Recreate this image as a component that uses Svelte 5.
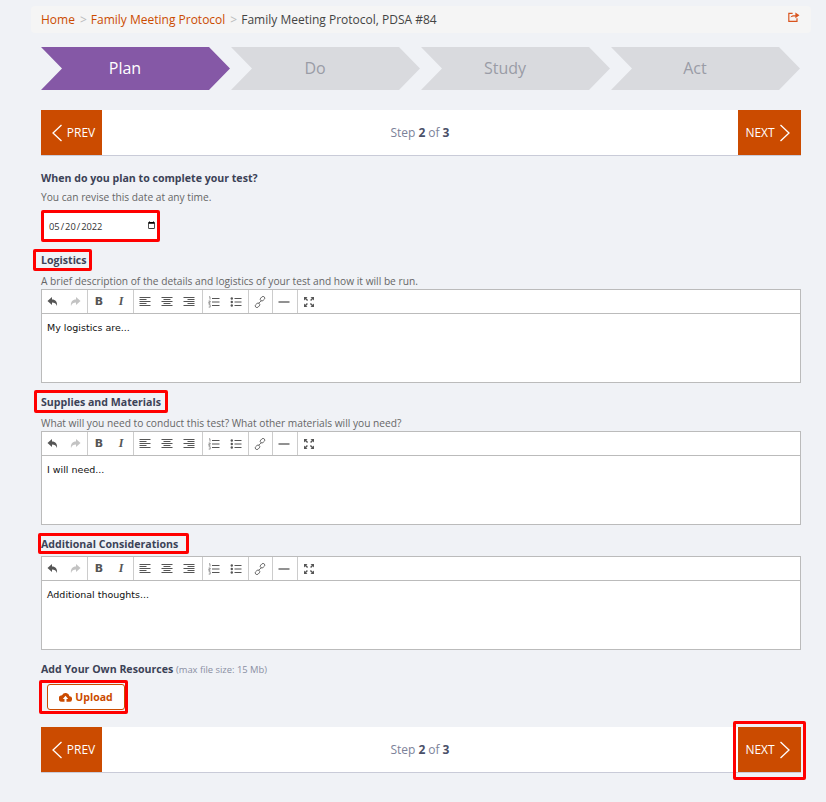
<script>
    const steps = ["Plan", "Do", "Study", "Act"];
    const editors = [
        {
            label: "Logistics",
            help: "A brief description of the details and logistics of your test and how it will be run.",
            text: "My logistics are...",
            mark: "mark-logistics",
        },
        {
            label: "Supplies and Materials",
            help: "What will you need to conduct this test? What other materials will you need?",
            text: "I will need...",
            mark: "mark-supplies",
        },
        {
            label: "Additional Considerations",
            help: "",
            text: "Additional thoughts...",
            mark: "mark-additional",
        },
    ];
    const tools = [
        ["undo", "redo"],
        ["bold", "italic"],
        ["left", "center", "right"],
        ["ol", "ul"],
        ["link"],
        ["hr"],
        ["full"],
    ];
</script>

{#snippet pager(markNext)}
    <div class="pager">
        <button class="pager-btn prev">
            <svg width="12" height="18" viewBox="0 0 12 18"><path d="M10.5 1 2 9l8.5 8" fill="none" stroke="#fff" stroke-width="1.300" /></svg>
            PREV
        </button>
        <div class="pager-text">Step <b>2</b> of <b>3</b></div>
        <button class="pager-btn next">
            NEXT
            <svg width="12" height="18" viewBox="0 0 12 18"><path d="M1.5 1 10 9l-8.500 8" fill="none" stroke="#fff" stroke-width="1.300" /></svg>
            {#if markNext}<span class="mark mark-next"></span>{/if}
        </button>
    </div>
{/snippet}

{#snippet icon(name)}
    {#if name === "bold"}
        <span class="glyph-b">B</span>
    {:else if name === "italic"}
        <span class="glyph-i">I</span>
    {:else}
        <svg width="12" height="12" viewBox="0 0 12 12" class:faded={name === "redo"}>
            {#if name === "undo"}
                <path d="M5 1 .5 5 5 9V6.500c2.500 0 4 .8 5 3.500.6-3.800-1.500-6.500-5-6.500z" fill="#555" />
            {:else if name === "redo"}
                <path d="M7 1l4.500 4L7 9V6.500c-2.500 0-4 .8-5 3.500C1.400 6.200 3.500 3.500 7 3.500z" fill="#555" />
            {:else if name === "left"}
                <path d="M.5 1.500h11M.5 3.500h7M.5 5.500h11M.5 7.500h7M.5 9.500h11" stroke="#555" fill="none" />
            {:else if name === "center"}
                <path d="M.5 1.500h11M2.500 3.500h7M.5 5.500h11M2.500 7.500h7M.5 9.500h11" stroke="#555" fill="none" />
            {:else if name === "right"}
                <path d="M.5 1.500h11M4.500 3.500h7M.5 5.500h11M4.500 7.500h7M.5 9.500h11" stroke="#555" fill="none" />
            {:else if name === "ol"}
                <path d="M4 2.500h7.500M4 6h7.500M4 9.500h7.500" stroke="#555" fill="none" />
                <path d="M1 .8h1v2.800M.6 5h1.600v1.200H.8v1.200h1.500M.7 8.700h1.500v2.400H.7" stroke="#555" stroke-width=".6" fill="none" />
            {:else if name === "ul"}
                <path d="M4.500 2.500H11.500M4.500 6H11.500M4.500 9.500H11.500" stroke="#555" fill="none" />
                <circle cx="1.800" cy="2.500" r="1.200" fill="#555" />
                <circle cx="1.800" cy="6" r="1.200" fill="#555" />
                <circle cx="1.800" cy="9.500" r="1.200" fill="#555" />
            {:else if name === "link"}
                <g fill="none" stroke="#666" stroke-width=".9">
                    <rect x="6" y="1" width="5" height="3.400" rx="1.700" transform="rotate(-45 8.500 2.700)" />
                    <rect x="1" y="7.600" width="5" height="3.400" rx="1.700" transform="rotate(-45 3.500 9.300)" />
                    <path d="M4.500 7.500l3-3" />
                </g>
            {:else if name === "hr"}
                <path d="M.5 6h11" stroke="#555" stroke-width="1.300" fill="none" />
            {:else if name === "full"}
                <path d="M1 1h3.500L3.300 2.200l1.800 1.700-1 1-1.800-1.700L1 4.500zM11 1v3.500L9.800 3.300 8.100 5.100l-1-1 1.700-1.800L7.500 1zM1 11V7.500l1.200 1.200 1.700-1.800 1 1-1.700 1.800L4.500 11zM11 11H7.500l1.200-1.200-1.800-1.700 1-1 1.800 1.700L11 7.500z" fill="#555" />
            {/if}
        </svg>
    {/if}
{/snippet}

<div class="page">
    <nav class="crumbs">
        <a href="#home">Home</a>
        <span class="sep">&gt;</span>
        <a href="#protocol">Family Meeting Protocol</a>
        <span class="sep">&gt;</span>
        <span>Family Meeting Protocol, PDSA #84</span>
        <svg class="share" width="12" height="10" viewBox="0 0 13 11">
            <path d="M8 3.500H5.500C4 3.500 3 4.500 2.800 6 4 4.900 6 4.800 8 4.900V7l4.500-3.300L8 .5z" fill="#d9541e" />
            <path d="M5 1.500H.8v8.800h9V7" fill="none" stroke="#d9541e" stroke-width="1.300" />
        </svg>
    </nav>

    <div class="steps">
        {#each steps as step, i}
            <div class="step" class:active={i === 0}>{step}</div>
        {/each}
    </div>

    {@render pager(false)}

    <form class="form">
        <div class="label date-label">When do you plan to complete your test?</div>
        <div class="help">You can revise this date at any time.</div>
        <div class="date-wrap">
            <input class="date" type="date" value="2022-05-20" />
            <span class="mark mark-date"></span>
        </div>

        {#each editors as ed}
            <div class="label ed-label">
                <span class="marked">{ed.label}<span class="mark {ed.mark}"></span></span>
            </div>
            {#if ed.help}<div class="help ed-help">{ed.help}</div>{/if}
            <div class="editor" class:no-help={!ed.help}>
                <div class="toolbar">
                    {#each tools as group}
                        <div class="group">
                            {#each group as name}
                                <span class="tool">{@render icon(name)}</span>
                            {/each}
                        </div>
                    {/each}
                </div>
                <div class="body">{ed.text}</div>
            </div>
        {/each}

        <div class="label res-label">Add Your Own Resources <small>(max file size: 15 Mb)</small></div>
        <button class="upload" type="button">
            <svg width="13" height="10" viewBox="0 0 13 10">
                <path d="M10.500 4.200A4 4 0 0 0 3 3.200 3.200 3.200 0 0 0 3 9.800h2.500V7H3.800l2.700-3.300L9.200 7H7.500v2.800H10a2.800 2.800 0 0 0 .5-5.600z" fill="#cb4b00" />
            </svg>
            Upload
            <span class="mark mark-upload"></span>
        </button>
    </form>

    <div class="bottom">
        {@render pager(true)}
    </div>
</div>

<style>
    :global(body) {
        background-color: #f0f2f6;
    }
    .page {
        height: 802px;
        overflow: hidden;
        padding: 6px 25px 0 41px;
        box-sizing: border-box;
        font-family: "Open Sans", "Liberation Sans", sans-serif;
        color: #3c4257;
    }
    .crumbs {
        display: flex;
        align-items: center;
        gap: 4px;
        height: 27px;
        margin: 0 -10px;
        padding: 0 10px;
        background: #f5f5f5;
        border-radius: 4px;
        font-size: 12px;
        position: relative;
        color: #444;
    }
    .crumbs a {
        color: #cb4b00;
        text-decoration: none;
    }
    .sep {
        color: #bbb;
        margin-left: 1px;
    }
    .share {
        position: absolute;
        right: 11px;
        top: 6px;
    }
    .steps {
        display: flex;
        margin-top: 14px;
        gap: 1px;
    }
    .step {
        width: 189px;
        height: 43px;
        padding: 0 21px 1px 0;
        box-sizing: border-box;
        display: flex;
        align-items: center;
        justify-content: center;
        background: #d9dade;
        color: #9a9ca6;
        font-size: 16px;
        clip-path: polygon(0 0, 168px 0, 100% 50%, 168px 100%, 0 100%, 21px 50%);
    }
    .step.active {
        background: #8558a6;
        color: #fff;
    }
    .pager {
        display: flex;
        align-items: stretch;
        height: 46px;
        margin-top: 20px;
        background: #fff;
        border-bottom: 1px solid #c9cbd8;
        box-sizing: border-box;
    }
    .pager-btn {
        display: flex;
        align-items: center;
        justify-content: center;
        gap: 4px;
        border: 0;
        padding: 0;
        background: #cb4b00;
        color: #fff;
        font: 500 12px "Open Sans", sans-serif;
        position: relative;
    }
    .prev {
        width: 61px;
        padding-left: 3px;
    }
    .next {
        width: 63px;
        padding-right: 3px;
    }
    .pager-text {
        flex: 1;
        display: flex;
        align-items: center;
        justify-content: center;
        gap: 3px;
        font-size: 12px;
        color: #7c8299;
    }
    .pager-text b {
        color: #4a4f68;
    }
    .form {
        padding-top: 14px;
    }
    .label {
        font-size: 10.600px;
        font-weight: 700;
        line-height: 16px;
        color: #3c4257;
    }
    .help {
        font-size: 10.200px;
        line-height: 14px;
        color: #666;
    }
    .date-label {
        margin-bottom: 4px;
    }
    .date-wrap {
        position: relative;
        width: 114px;
        margin: 8px 0 12px 3px;
    }
    .date {
        display: block;
        width: 114px;
        height: 28px;
        box-sizing: border-box;
        border: 0;
        padding: 0 2px 0 4px;
        background: #fff;
        font: 9.300px "Open Sans", sans-serif;
        color: #333;
    }
    .date::-webkit-calendar-picker-indicator {
        width: 9px;
        height: 10px;
        padding: 0;
        margin: 0;
    }
    .ed-label {
        margin-top: 11px;
    }
    .ed-help {
        margin-top: 6px;
        margin-bottom: 1px;
    }
    .marked {
        position: relative;
        display: inline-block;
    }
    .mark {
        position: absolute;
        border: 3px solid #f00;
        border-radius: 2px;
        pointer-events: none;
    }
    .mark-date {
        inset: -2px -2px -2px -3px;
    }
    .mark-logistics {
        inset: -3px -5px -3px -8px;
    }
    .mark-supplies {
        inset: -4px -7px -3px -7px;
    }
    .mark-additional {
        inset: -3px -11px -2px -3px;
    }
    .mark-upload {
        inset: -5px -4px -5px -9px;
    }
    .mark-next {
        inset: -6px -5px -8px -5px;
    }
    .editor {
        height: 94px;
        box-sizing: border-box;
        background: #fff;
        border: 1px solid #bbb;
    }
    .editor.no-help {
        margin-top: 4px;
    }
    .toolbar {
        display: flex;
        height: 24px;
        box-sizing: border-box;
        border-bottom: 1px solid #bbb;
    }
    .group {
        display: flex;
        border-right: 1px solid #ccc;
        padding-right: 1px;
    }
    .group:nth-child(3),
    .group:nth-child(6) {
        padding-right: 2px;
    }
    .group:last-child {
        border-right: 0;
    }
    .tool {
        width: 22px;
        display: flex;
        align-items: center;
        justify-content: center;
    }
    .faded {
        opacity: 0.35;
    }
    .glyph-b {
        font: 700 11px "DejaVu Sans", sans-serif;
        color: #555;
    }
    .glyph-i {
        font: italic 700 12px "Liberation Serif", serif;
        color: #555;
    }
    .body {
        padding: 8px 5px;
        font: 9.500px/12px "DejaVu Sans", sans-serif;
        color: #111;
    }
    .res-label {
        margin-top: 11px;
    }
    .res-label small {
        font-size: 9.400px;
        font-weight: 400;
        color: #8a8fa3;
    }
    .upload {
        position: relative;
        display: flex;
        align-items: center;
        justify-content: center;
        gap: 3px;
        width: 78px;
        height: 26px;
        margin: 6px 0 0 6px;
        padding: 0;
        background: #fff;
        border: 1px solid #cb4b00;
        border-radius: 3px;
        color: #cb4b00;
        font: 700 10.500px "Open Sans", sans-serif;
    }
    .bottom {
        margin-top: -3px;
    }
</style>
